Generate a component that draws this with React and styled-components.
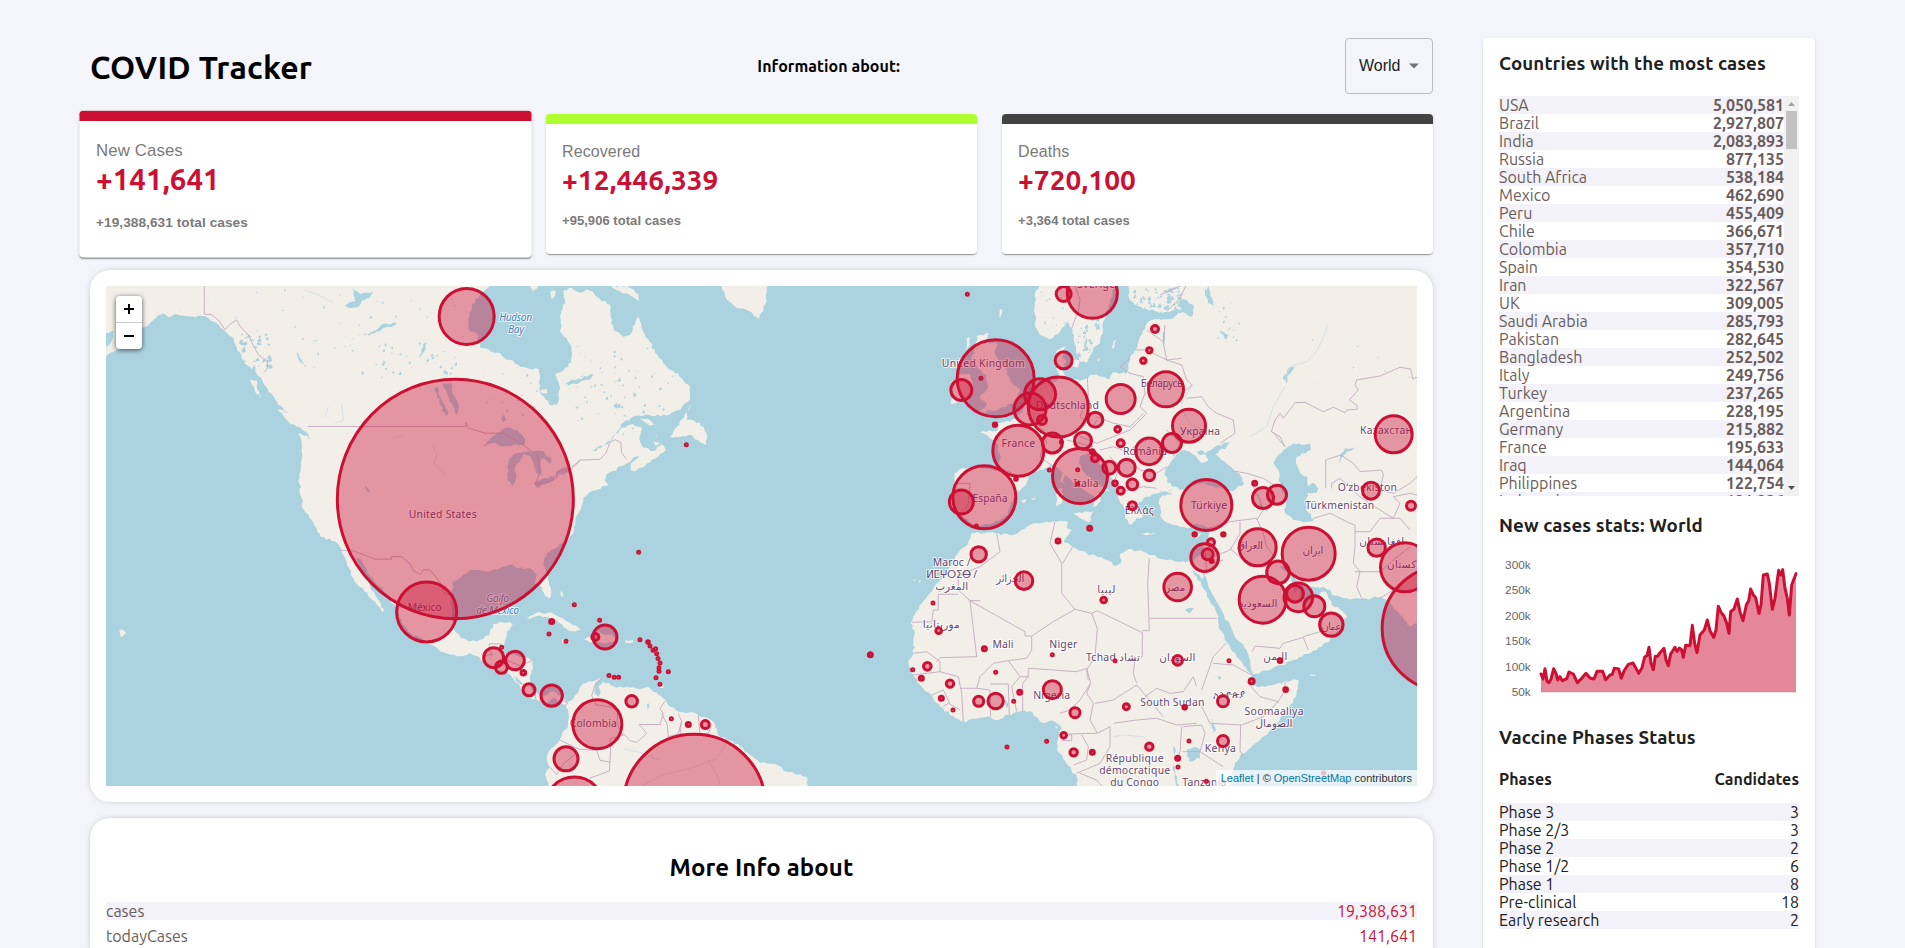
import React from "react";
import styled, { createGlobalStyle } from "styled-components";

const ubuntu = `Ubuntu, "Open Sans", "Noto Sans", sans-serif`;
const arial = `"Liberation Sans", Arial, sans-serif`;

const GlobalStyle = createGlobalStyle`
  * { box-sizing: border-box; margin: 0; }
  html, body { height: 100%; overflow: hidden; }
  body { background: #f4f5fb; font-family: ${ubuntu}; font-size: 16px; color: #000; }
  #root { height: 100%; }
`;

const Page = styled.div`
  display: flex;
  gap: 50px;
  height: 948px;
  padding: 38px 90px 0;
  overflow: hidden;
`;
const Main = styled.main`
  width: 1343px;
  flex: none;
`;
const Header = styled.header`
  display: flex;
  align-items: center;
  justify-content: space-between;
  height: 56px;
`;
const Title = styled.h1`
  padding-top: 1px;
  font-size: 32px;
  line-height: 36px;
  letter-spacing: 0.25px;
  font-weight: 700;
`;
const Prompt = styled.h4`
  font-size: 16px;
  line-height: 20px;
  font-weight: 700;
  letter-spacing: 0.05px;
`;
const Select = styled.button`
  display: flex;
  align-items: center;
  gap: 7px;
  width: 88px;
  height: 56px;
  padding: 0 0 0 13px;
  background: transparent;
  border: 1px solid #bdbec3;
  border-radius: 4px;
  font: 16px ${arial};
  color: #212121;
`;

const Cards = styled.section`
  display: flex;
  justify-content: space-between;
  margin-top: 20px;
`;
const Card = styled.article`
  width: 431px;
  height: 140px;
  padding: 16px;
  background: #fff;
  border-top: 10px solid ${(p) => p.$accent};
  border-radius: 4px;
  box-shadow: 0 2px 1px -1px rgba(0, 0, 0, 0.2), 0 1px 1px rgba(0, 0, 0, 0.14),
    0 1px 3px rgba(0, 0, 0, 0.12);
  transform: ${(p) => (p.$active ? "scale(1.05)" : "none")};
`;
const CardLabel = styled.p`
  font: 16px/23px ${arial};
  letter-spacing: 0.1px;
  color: #7a7a7a;
`;
const CardValue = styled.h2`
  font-size: 28px;
  line-height: 33px;
  letter-spacing: 0.05px;
  color: #cc1034;
`;
const CardTotal = styled.p`
  margin-top: 16px;
  font: bold 13px/18px ${arial};
  letter-spacing: 0.05px;
  color: #7a7a7a;
`;

const Panel = styled.section`
  margin-top: 16px;
  padding: 16px;
  background: #fff;
  border-radius: 20px;
  box-shadow: 0 0 8px -4px rgba(0, 0, 0, 0.5);
`;
const MapBox = styled.div`
  position: relative;
  height: 500px;
  overflow: hidden;
  background: #aad3df;
  svg { display: block; }
`;
const ZoomBar = styled.div`
  position: absolute;
  left: 10px;
  top: 10px;
  width: 26px;
  border-radius: 4px;
  background: #fff;
  box-shadow: 0 1px 5px rgba(0, 0, 0, 0.65);
`;
const ZoomButton = styled.div`
  display: flex;
  align-items: center;
  justify-content: center;
  height: 26px;
  & + & { height: 27px; border-top: 1px solid #ccc; }
`;
const Attribution = styled.div`
  position: absolute;
  right: 0;
  bottom: 0;
  height: 16px;
  padding: 0 5px;
  background: rgba(255, 255, 255, 0.7);
  font: 11px/16px ${arial};
  color: #333;
  a { color: #0078a8; }
`;

const InfoTitle = styled.h2`
  padding: 17px 0;
  font-size: 24px;
  line-height: 34px;
  letter-spacing: 0.1px;
  text-align: center;
`;
const InfoRow = styled.div`
  display: flex;
  justify-content: space-between;
  height: 18px;
  margin-bottom: 7px;
  line-height: 18px;
  font-size: 16px;
  color: #6a5d5d;
  background: ${(p) => (p.$shaded ? "#f3f2f8" : "transparent")};
`;
const InfoValue = styled.span`
  color: #cc1034;
`;

const Sidebar = styled.aside`
  width: 332px;
  height: 1000px;
  padding: 16px;
  background: #fff;
  border-radius: 4px;
  color: #212121;
  box-shadow: 0 2px 1px -1px rgba(0, 0, 0, 0.2), 0 1px 1px rgba(0, 0, 0, 0.14),
    0 1px 3px rgba(0, 0, 0, 0.12);
`;
const SideTitle = styled.h3`
  padding-bottom: 2px;
  font-size: 18.72px;
  line-height: 20px;
  letter-spacing: 0.12px;
`;
const CountryBox = styled.div`
  display: flex;
  height: 400px;
  margin: 20px 0;
  overflow: hidden;
`;
const Rows = styled.div`
  flex: 1;
`;
const Row = styled.div`
  display: flex;
  justify-content: space-between;
  height: 18px;
  line-height: 18px;
  font-size: 16px;
  color: ${(p) => (p.$dark ? "#212121" : "#6a5d5d")};
  &:nth-child(odd) { background: #f3f2f8; }
`;
const Strong = styled.strong`
  font-weight: 700;
`;
const ScrollTrack = styled.div`
  display: flex;
  flex-direction: column;
  align-items: center;
  width: 15px;
  background: #f1f1f1;
`;
const ScrollThumb = styled.div`
  width: 11px;
  height: 38px;
  margin-bottom: auto;
  background: #c1c1c1;
`;
const ChartBox = styled.div`
  height: 156px;
  margin: 18px 0 16px;
  svg { display: block; overflow: visible; }
`;
const PhaseHead = styled.div`
  display: flex;
  justify-content: space-between;
  margin: 19px 0 14px;
  font-size: 16px;
  line-height: 20px;
  font-weight: 700;
  letter-spacing: 0.05px;
`;

const stats = [
  ["New Cases", "+141,641", "+19,388,631 total cases", "#cc1034", true],
  ["Recovered", "+12,446,339", "+95,906 total cases", "#adff2f", false],
  ["Deaths", "+720,100", "+3,364 total cases", "#434343", false],
];
const countries = [
  ["USA", "5,050,581"], ["Brazil", "2,927,807"], ["India", "2,083,893"], ["Russia", "877,135"],
  ["South Africa", "538,184"], ["Mexico", "462,690"], ["Peru", "455,409"], ["Chile", "366,671"],
  ["Colombia", "357,710"], ["Spain", "354,530"], ["Iran", "322,567"], ["UK", "309,005"],
  ["Saudi Arabia", "285,793"], ["Pakistan", "282,645"], ["Bangladesh", "252,502"], ["Italy", "249,756"],
  ["Turkey", "237,265"], ["Argentina", "228,195"], ["Germany", "215,882"], ["France", "195,633"],
  ["Iraq", "144,064"], ["Philippines", "122,754"], ["Indonesia", "121,226"],
];
const phases = [
  ["Phase 3", 3], ["Phase 2/3", 3], ["Phase 2", 2], ["Phase 1/2", 6],
  ["Phase 1", 8], ["Pre-clinical", 18], ["Early research", 2],
];

/* Map geometry: the two hemispheres use their own grids, projected onto the map box. */
const west = (x, y) => [(x - 78) / 3, (y - 73) / 2.798];
const east = (x, y) => [774 + x / 3, y / 3 - 16];
const trace = (project, text, close = true) =>
  text
    .split("|")
    .map((part) => {
      const pts = part.trim().split(/\s+/).map((p) => p.split(",").map(Number));
      return "M" + pts.map(([x, y]) => project(x, y).map((n) => n.toFixed(1)).join(",")).join("L") + (close ? "Z" : "");
    })
    .join("");

/* Roughens a coast by displacing the middle of each edge. */
let seed = 7;
const rand = () => {
  seed = (seed * 16807) % 2147483647;
  return seed / 2147483647;
};
const rough = (text, amount = 0.22) =>
  text
    .split("|")
    .map((part) => {
      const pts = part.trim().split(/\s+/).map((p) => p.split(",").map(Number));
      const out = [];
      pts.forEach((a, i) => {
        const b = pts[(i + 1) % pts.length];
        const d = Math.hypot(b[0] - a[0], b[1] - a[1]);
        out.push(a);
        if (d < 14 || d > 90) return;
        const steps = Math.max(2, Math.round(d / 9));
        for (let k = 1; k < steps; k++) {
          const t = k / steps;
          const o = (rand() - 0.5) * Math.min(d, 34) * amount;
          out.push([a[0] + (b[0] - a[0]) * t + (o * (b[1] - a[1])) / d, a[1] + (b[1] - a[1]) * t - (o * (b[0] - a[0])) / d]);
        }
      });
      return out.map((p) => p.join(",")).join(" ");
    })
    .join("|");

const americas = `78,73 78,204 100,199 92,232 78,245 78,270 100,258 130,238 160,215 188,190 215,172 235,155 250,150 265,160 290,152 330,158 380,160 400,172 430,195 455,215 470,245 485,275 500,295 530,318 550,345 575,375 595,405 620,425 650,450 680,475 692,505 682,492 655,485 665,510 665,560 657,600 662,660 672,700 700,735 722,775 765,787 785,810 800,845 820,890 835,912 850,920 870,945 890,965 908,987 912,978 890,945 870,915 848,875 825,835 845,838 862,875 910,925 935,960 955,985 965,1015 985,1040 1040,1070 1075,1090 1130,1110 1170,1100 1190,1108 1220,1130 1260,1155 1290,1160 1315,1185 1330,1210 1350,1225 1375,1232 1400,1240 1420,1225 1440,1240 1455,1245 1465,1260 1465,1300 1440,1340 1410,1370 1400,1400 1410,1420 1395,1440 1405,1472 2185,1472 2178,1445 2120,1432 2080,1410 2040,1408 2010,1385 1980,1360 1950,1345 1915,1330 1905,1300 1890,1285 1850,1270 1800,1265 1770,1250 1755,1230 1730,1210 1700,1195 1670,1200 1640,1195 1600,1193 1570,1180 1555,1192 1562,1210 1555,1222 1543,1210 1545,1185 1563,1168 1510,1185 1490,1215 1475,1232 1460,1240 1450,1225 1420,1207 1390,1220 1365,1210 1350,1190 1355,1150 1360,1120 1330,1110 1290,1105 1265,1100 1275,1065 1280,1040 1298,1020 1290,1013 1240,1018 1228,1050 1200,1063 1170,1068 1140,1055 1120,1030 1115,980 1112,940 1120,900 1150,880 1170,868 1200,868 1230,872 1260,862 1290,853 1330,865 1350,862 1370,880 1365,905 1385,915 1395,940 1410,948 1413,920 1405,895 1398,870 1390,850 1400,820 1440,795 1465,780 1480,765 1485,740 1490,715 1505,690 1510,665 1545,645 1585,630 1575,618 1580,600 1600,590 1640,570 1660,552 1685,545 1652,570 1652,588 1665,592 1700,570 1735,550 1757,532 1745,515 1720,535 1690,525 1678,500 1685,470 1660,460 1620,475 1588,512 1530,540 1590,505 1630,455 1670,435 1760,435 1800,420 1830,390 1830,355 1805,330 1780,310 1750,290 1725,260 1710,230 1690,200 1677,150 1665,180 1650,210 1630,215 1600,195 1592,150 1590,125 1560,110 1540,90 1520,82 1500,92 1475,78 1450,85 1455,120 1440,160 1445,185 1440,200 1470,235 1475,270 1465,300 1425,320 1440,360 1430,405 1415,408 1380,370 1377,305 1330,300 1290,280 1250,260 1215,247 1200,245 1190,205 1170,200 1165,165 1185,110 1215,85 1230,73`;
const westIslands = `592,418 640,432 668,455 688,478 675,480 625,452 | 510,335 530,338 532,362 545,388 524,365 | 1340,1002 1375,985 1420,990 1470,1015 1512,1035 1468,1038 1430,1008 1380,995 | 1512,1062 1545,1040 1595,1048 1612,1065 1570,1072 1530,1070 | 1636,1064 1660,1064 1658,1071 1636,1071 | 1445,1063 1462,1063 1470,1072 1448,1072 | 1833,403 1812,440 1770,495 1835,490 1860,510 1878,518 1882,492 1860,455 1822,447 1820,430 | 1680,443 1700,445 1728,460 1712,464 | 1925,73 1945,115 1970,135 2000,140 2036,166 2060,115 2060,73 | 1592,73 1640,73 1675,95 1678,115 1650,100 1610,85 | 1350,73 1375,73 1358,88 | 1412,88 1425,84 1425,100 1416,110 | 118,1035 128,1035 138,1045 122,1055 | 1730,485 1732,500 | 1718,508 1740,512 1726,520 | 1380,365 1400,362 1402,372 1385,372 | 2360,1095 2366,1097 2360,1100 | 1445,925 1448,945 1440,935 | 1740,1190 1750,1188 1750,1198 1738,1198`;
const westLakes = `1208,520 1235,495 1275,470 1310,475 1335,500 1332,520 1300,518 1270,522 1240,512 | 1285,565 1300,545 1330,540 1322,560 1306,580 1308,612 1296,632 1282,615 | 1322,542 1345,535 1390,535 1415,560 1412,570 1385,555 1382,585 1388,608 1368,595 1360,565 1350,548 | 1362,625 1395,610 1435,603 1410,622 1370,637 | 1428,592 1470,580 1470,596 1430,602 | 1088,345 1112,343 1122,380 1138,410 1130,433 1108,395 | 1062,360 1072,355 1082,385 1105,430 1098,436 1078,400 | 1262,440 1272,433 1279,448 1268,455 | 795,128 825,115 818,80 840,95 880,90 870,105 845,115 835,132 805,134 | 862,208 895,192 912,178 960,178 925,188 890,200 868,212 | 852,632 865,640 870,652 858,645 | 1030,235 1042,230 1030,260 1018,275 | 1600,410 1610,400 1618,408 1610,416 | 1700,1245 1708,1240 1702,1260 | 1300,1165 1318,1175 1330,1190 1315,1182 | 650,258 665,280 680,302 660,285 | 1455,345 1475,335 1500,335 1485,345 | 1460,345 1540,320 1530,335 1465,352`;
const oldWorld = `745,48 750,90 790,118 850,128 905,118 905,130 850,142 802,158 780,200 765,240 750,262 745,290 740,312 700,306 690,326 640,315 600,332 560,328 545,300 560,275 545,262 560,225 530,240 528,280 535,330 500,335 470,360 445,395 420,430 390,455 350,462 355,480 300,488 330,505 350,520 362,560 350,605 300,592 245,595 222,612 225,645 208,700 228,735 260,745 285,775 340,758 385,735 392,700 412,665 440,640 445,615 480,600 520,585 545,605 580,640 620,665 645,680 640,712 662,692 655,665 690,665 650,640 615,610 598,580 600,560 625,548 650,575 690,615 710,650 718,690 740,720 735,745 755,765 768,745 790,740 770,705 800,680 838,668 880,660 845,678 836,700 845,745 880,765 920,775 950,762 990,775 985,800 970,835 955,858 935,873 890,875 850,868 790,845 745,838 722,850 722,880 708,887 680,870 620,850 590,838 578,830 550,815 575,780 560,775 565,757 540,752 500,755 450,765 400,795 345,790 310,790 275,790 265,820 240,840 210,890 180,930 150,970 125,1000 100,1040 92,1060 105,1090 100,1150 85,1180 100,1215 125,1250 150,1270 180,1310 220,1338 250,1355 330,1340 345,1350 400,1330 450,1323 480,1355 525,1355 545,1375 533,1410 530,1440 560,1480 590,1520 592,1548 1050,1548 1065,1480 1090,1450 1140,1410 1180,1370 1220,1320 1248,1280 1255,1230 1240,1228 1180,1245 1130,1250 1112,1240 1115,1215 1080,1170 1050,1130 1020,1080 1010,1030 980,970 950,920 933,898 945,905 967,928 974,905 985,950 1030,1030 1060,1090 1100,1140 1110,1170 1120,1213 1170,1200 1240,1170 1310,1140 1350,1110 1380,1070 1402,1040 1390,1025 1355,1005 1338,965 1325,965 1300,988 1265,988 1255,955 1245,970 1235,935 1218,905 1200,888 1215,892 1245,925 1280,955 1330,950 1350,960 1355,975 1400,985 1440,987 1500,982 1520,990 1530,1000 1560,1035 1590,1070 1611,1060 1611,48`;
const eastIslands = `290,198 328,190 312,220 350,218 345,255 372,290 400,345 422,358 410,398 360,415 290,432 322,402 298,380 325,350 318,315 300,300 275,275 285,230 | 235,315 270,312 278,350 265,390 212,402 218,365 210,345 | 478,48 465,70 465,160 480,195 508,208 535,192 565,155 578,180 588,230 600,275 620,278 640,235 660,220 668,190 672,150 690,100 705,48 | 578,270 600,272 595,292 580,290 | 700,212 708,210 704,230 696,238 | 530,660 548,655 545,700 528,710 | 545,612 552,610 550,640 542,635 | 580,728 640,724 628,757 600,745 | 782,788 830,790 800,796 | 938,800 965,790 950,806 | 422,692 440,686 432,700 | 452,686 468,684 462,690 | 360,118 368,120 358,145 | 260,205 268,200 270,225 256,245 | 1290,1214 1308,1214 1306,1218 1292,1218 | 1345,1245 1350,1244 | 100,930 106,925 103,935 | 118,930 125,932 116,938 | 526,1368 534,1370 528,1376 | 652,270 660,258 656,275`;
const eastSeas = `870,580 902,542 930,545 948,558 965,580 985,572 975,552 1005,530 1050,515 1040,530 1005,552 1045,585 1078,610 1093,640 1060,662 1020,652 975,640 935,648 900,660 862,638 855,605 | 950,545 965,540 978,552 960,556 | 1210,540 1240,520 1290,522 1292,540 1250,560 1248,580 1262,612 1282,620 1285,650 1300,638 1315,655 1310,668 1282,668 1278,720 1303,750 1270,757 1240,750 1215,728 1220,690 1200,640 1195,600 1180,578 | 895,95 915,88 943,112 935,140 905,125 | 968,52 980,62 985,48 1000,95 1000,108 985,100 | 1015,175 1045,195 1040,208 1022,190 | 840,125 895,130 880,145 840,150 | 848,185 855,190 856,225 848,215 | 920,1438 942,1430 962,1440 960,1465 928,1475 | 881,1425 888,1440 884,1455 | 880,1485 890,1530 898,1548 890,1548 | 840,664 880,670 852,678 | 1375,590 1380,560 1395,535 1425,532 1400,545 1383,565 | 995,1345 1008,1380 1000,1390 | 740,925 742,932 | 375,1290 385,1305 380,1320 | 1135,710 1143,700 1150,720 | 1160,700 1164,720 1158,725 | 1208,325 1230,292 1245,290 1222,318 1222,340 | 620,200 612,230 616,240 622,215 | 1012,1218 1025,1222 1018,1230 | 915,1020 942,1014 930,1030`;

const westBorders = `373,73 373,152 395,153 415,168 435,195 450,180 470,168 480,185 505,210 520,240 535,265 562,285 562,305 552,315 | 683,466 1157,466 1157,455 1165,470 1215,485 1270,485 1310,505 1340,525 1370,545 1380,575 1378,600 1365,628 1395,625 1430,610 1432,592 1470,588 1500,562 | 1475,580 1500,560 1560,558 1578,540 1590,510 1605,503 1622,510 1625,540 1638,556 | 785,813 820,814 885,837 935,837 935,830 965,830 990,850 1000,870 1022,880 1030,867 1050,867 1070,890 1085,910 1090,930 1112,940 | 1207,1125 1222,1105 1238,1105 1228,1090 1228,1074 1262,1074 1262,1100 | 1245,1130 1265,1115 1320,1135 1360,1120 | 1318,1185 1345,1190 | 1367,1215 1367,1230 | 1450,1232 1462,1240 1455,1250 | 1563,1170 1545,1190 1535,1220 1548,1245 1590,1250 1612,1262 1612,1300 1630,1330 1590,1340 1592,1372 1588,1430 1530,1450 | 1630,1325 1650,1345 1670,1350 1700,1325 1678,1300 1740,1300 1750,1270 1740,1255 1755,1235 | 1745,1270 1762,1300 1765,1335 1795,1325 1805,1290 1795,1270 | 1805,1290 1800,1325 1830,1330 1860,1325 1855,1275 | 1860,1325 1885,1325 1895,1300 | 1437,1342 1465,1355 1500,1370 1550,1372 1560,1400 1590,1405 | 1410,1420 1430,1440 1450,1410 1490,1380`;
const eastBorders = `592,130 575,175 | 595,125 600,90 585,48 | 765,240 800,240 860,270 905,265 | 750,265 720,290 750,310 790,320 | 790,320 795,370 780,410 800,430 | 840,75 900,48 | 917,48 900,85 862,122 | 855,165 850,220 860,270 905,285 920,330 935,345 920,360 | 622,320 625,380 600,440 640,470 650,450 | 650,440 700,460 750,470 790,430 | 800,430 750,480 700,500 650,520 600,500 | 660,540 700,530 740,545 780,520 820,500 | 440,430 490,480 500,520 | 490,520 480,560 520,590 | 560,510 600,520 640,530 | 228,640 270,640 265,700 240,740 | 350,590 420,620 | 690,560 720,590 700,640 | 760,580 780,600 830,610 860,590 | 730,665 790,650 830,655 | 800,180 850,215 | 920,385 965,380 985,410 1010,430 1060,450 1065,490 1020,520 | 860,480 900,520 880,560 | 1060,603 1100,610 1150,625 1190,650 1210,640 | 1120,650 1140,690 1150,720 1130,750 | 1178,485 1215,530 | 1174,485 1185,450 1200,430 1210,445 1245,398 1275,397 1330,425 1360,412 1395,428 1400,420 1432,418 1430,405 1408,390 1435,360 1425,345 1430,330 1500,318 1560,292 1592,297 1598,327 1611,322 | 1215,530 1200,500 1174,485 | 1337,655 1337,570 1382,555 1420,580 1440,605 1505,600 1510,615 1500,660 1540,670 1590,640 1611,620 | 1355,655 1355,640 1380,625 1440,680 1500,720 1540,745 | 1540,745 1560,700 1540,680 1590,670 1611,675 | 1300,745 1350,730 1410,760 1425,765 1425,830 1420,880 1440,905 1430,950 1445,985 | 1425,785 1470,785 1500,745 1560,745 1590,780 | 1425,905 1500,905 1540,870 1590,830 | 985,775 1050,755 1130,745 1150,790 1160,830 1190,870 | 1080,755 1080,790 1050,840 1000,860 | 1050,835 1110,890 1160,890 | 975,840 980,905 | 1000,880 1030,870 | 1117,1145 1125,1128 1200,1135 1210,1120 1270,1102 1285,1140 | 1270,1100 1320,1085 1330,1030 | 808,865 803,940 808,1082 785,1082 | 808,1045 1010,1045 | 787,1088 787,1160 765,1165 760,1210 770,1240 | 652,1022 787,1088 | 652,1022 635,1030 652,1075 645,1160 620,1200 625,1230 | 525,755 510,820 545,880 545,970 585,1018 635,1030 | 578,830 548,880 | 585,1018 520,1055 455,1098 435,1098 435,1085 270,992 235,960 235,920 262,905 300,890 360,845 350,790 | 235,973 175,973 175,1020 160,1020 155,1055 95,1057 | 270,992 290,1160 180,1163 170,1175 | 270,992 300,992 | 455,1098 455,1140 440,1165 385,1172 340,1180 300,1220 290,1255 | 100,1150 140,1145 180,1175 180,1205 100,1215 | 180,1205 235,1220 245,1270 250,1355 | 155,1275 190,1260 210,1300 | 190,1310 205,1300 240,1320 | 240,1255 290,1255 330,1260 332,1340 | 330,1242 385,1242 388,1335 | 385,1172 420,1220 395,1250 410,1325 | 428,1325 428,1240 445,1220 420,1220 | 445,1220 445,1195 520,1200 590,1205 620,1195 632,1240 600,1290 570,1320 540,1330 | 632,1240 620,1270 640,1300 630,1350 652,1390 560,1392 | 645,1300 700,1290 770,1245 800,1280 850,1340 | 555,1395 575,1395 575,1412 545,1412 | 605,1395 625,1430 620,1470 580,1485 | 652,1390 690,1370 690,1430 660,1480 590,1510 | 600,1510 650,1530 665,1548 | 700,1360 770,1350 830,1345 890,1365 950,1360 | 795,1280 830,1255 870,1270 910,1265 940,1220 950,1250 | 965,1260 1000,1160 1038,1120 | 1000,1180 1060,1185 1115,1215 | 1100,1235 1140,1280 1195,1295 1215,1260 1215,1235 | 1195,1295 1150,1340 1085,1365 990,1360 960,1300 | 1082,1365 1080,1440 1090,1460 | 908,1445 960,1445 1030,1490 | 905,1370 900,1445 890,1470 | 965,1365 975,1390 960,1445 | 910,1370 965,1365 | 1500,985 1540,960`;

const flecks = (n, x0, y0, x1, y1, size) =>
  Array.from({ length: n }, () => {
    const x = x0 + rand() * (x1 - x0);
    const y = y0 + rand() * (y1 - y0);
    const a = size * (0.4 + rand());
    return `${x},${y} ${x + a},${y - a * rand() * 1.6} ${x + a * 1.5},${y + a * 0.3} ${x + a * 0.4},${y + a * rand()}`;
  }).join("|");
const westFlecks = [
  flecks(50, 700, 80, 1160, 320, 4),
  flecks(24, 1210, 310, 1370, 440, 3.5),
  flecks(24, 900, 240, 1120, 330, 5),
  flecks(44, 1460, 230, 1780, 430, 5),
  flecks(20, 1480, 300, 1680, 500, 5),
  flecks(24, 230, 80, 680, 240, 3),
].join("|");
const coastFlecks = flecks(34, 475, 210, 570, 310, 7);
const eastFlecks = [
  flecks(30, 755, 50, 880, 115, 7),
  flecks(24, 590, 150, 650, 260, 7),
  flecks(22, 480, 60, 560, 190, 4),
  flecks(24, 840, 50, 900, 120, 8),
  flecks(12, 1000, 90, 1090, 230, 3.5),
  flecks(12, 1250, 200, 1600, 340, 2.5),
  flecks(14, 660, 640, 800, 740, 5),
].join("|");
const rivers = `1342,165 1335,190 1320,225 1305,250 1280,275 1230,290 1215,330 | 1215,350 1180,410 1160,470 1110,500 | 905,390 905,420 930,460 960,480 | 700,1400 730,1395 790,1400 830,1440 | 940,340 905,400`;
const westRivers = `1685,1472 1750,1440 1840,1420 1910,1395 1940,1350 | 1885,1400 1910,1440 1920,1472 | 1060,520 1070,545 1062,570 1095,600 | 940,498 965,492 | 1630,1368 1690,1380 1740,1400 | 675,85 720,100 760,120 | 735,440 745,410 | 785,400 790,450 765,455`;

/* Case circle: x, y, horizontal radius and, where it differs, vertical radius. */
const westCases = [
  [1160, 158, 27.5, 28], [1126, 669, 118, 119.7], [1040, 985, 30], [1241, 1113, 10], [1265, 1084, 1], [1264, 1140, 6],
  [1305, 1121, 9.3], [1330, 1155, 2.3], [1347, 1203, 6], [1415, 1219, 10.7], [1415, 1012, 2], [1483, 965, 1],
  [1407, 1047, 1], [1458, 1067, 1], [1552, 1299, 24.5], [1458, 1396, 12], [1483, 1528, 29], [1843, 1526, 71],
  [1655, 1235, 5.8], [1774, 1284, 1], [1825, 1300, 2], [1876, 1300, 4], [1575, 1055, 12], [1546, 1055, 3.5],
  [1559, 1008, 1], [1680, 1063, 1], [1704, 1069, 1.3], [1710, 1080, 1], [1719, 1092, 1], [1727, 1088, 1],
  [1730, 1102, 1], [1734, 1115, 1], [1740, 1128, 1], [1737, 1141, 1], [1737, 1151, 1], [1765, 1152, 1],
  [1728, 1169, 1], [1740, 1187, 1], [1587, 1163, 1], [1603, 1168, 1], [1616, 1168, 1], [1676, 818, 1],
  [1819, 517, 1], [2371, 1105, 2],
];
const eastCases = [
  [262, 73, 1], [551, 72, 7.5], [637, 70, 25], [347, 325, 38.5], [303, 325, 1], [244, 360, 10.5], [345, 464, 1.7],
  [551, 271, 8.5], [480, 373, 15.5], [450, 417, 16], [535, 411, 30], [486, 450, 4.5], [415, 542, 25.5],
  [313, 682, 31.5], [244, 696, 12], [289, 768, 1], [408, 627, 1.3], [508, 600, 1], [517, 519, 10], [544, 516, 1],
  [609, 512, 8.5], [600, 618, 27.5], [593, 599, 1], [593, 642, 1], [637, 545, 2], [645, 565, 3.5], [646, 449, 7.5],
  [713, 478, 2.8], [722, 520, 3.5], [722, 387, 14.5], [825, 177, 3.5], [808, 241, 2.7], [790, 272, 2.7],
  [858, 358, 17.5], [688, 593, 6.5], [740, 593, 8.5], [705, 640, 2.3], [722, 662, 3.5], [757, 643, 5.3],
  [808, 616, 5.3], [807, 544, 13.3], [757, 707, 4], [629, 775, 2], [927, 467, 16.5], [876, 519, 9.5],
  [979, 705, 25.5], [1124, 640, 2], [1149, 684, 10.5], [1191, 674, 9.5], [1541, 493, 18.5], [1473, 662, 8.5],
  [1593, 707, 4.5], [944, 793, 1.7], [1030, 793, 1.7], [1133, 832, 18.5], [1286, 851, 26.5], [993, 817, 3.5],
  [974, 863, 13.8], [983, 853, 5.5], [995, 873, 1.5], [893, 951, 13.8], [1194, 907, 11.3], [1148, 989, 23.5],
  [1255, 982, 14.3], [1245, 971, 8.5], [1303, 1009, 10.5], [1354, 1064, 11.7], [1490, 833, 8.7], [1575, 892, 24.5],
  [1694, 1075, 62.5], [1115, 1234, 2.5], [1047, 1172, 1], [1200, 1172, 1.8], [1217, 1259, 1.8], [1029, 1294, 5.5],
  [914, 1312, 1.8], [893, 1171, 4.8], [1029, 1413, 5.5], [927, 1413, 1], [893, 1465, 2], [894, 1491, 1],
  [979, 1534, 1], [1331, 1509, 1], [296, 853, 7.7], [432, 932, 8.8], [534, 813, 2], [671, 990, 2.8], [159, 999, 1],
  [176, 1082, 2.8], [313, 1136, 2], [517, 1154, 1], [705, 1172, 1], [142, 1189, 3.8], [98, 1199, 1], [124, 1225, 2],
  [210, 1241, 3.7], [184, 1285, 2], [219, 1320, 1], [296, 1294, 5], [347, 1293, 7.7], [401, 1294, 1],
  [419, 1267, 2], [347, 1207, 1], [517, 1259, 9], [585, 1328, 5], [739, 1310, 3], [551, 1396, 2.8], [500, 1414, 1],
  [581, 1447, 3.7], [637, 1447, 2], [808, 1430, 3.7], [381, 1431, 1],
];

/* Label: centre x, baseline y, width in pixels, text. */
const westLabels = [[1088, 721, 68, "United States"], [1034, 982, 34, "México"], [1540, 1306, 47, "Colombia"]];
const seaLabels = [[1307, 171, 33, "Hudson"], [1308, 205, 16, "Bay"], [1253, 957, 23, "Golfo"], [1253, 991, 43, "de México"]];
const eastLabels = [
  [310, 290, 83, "United Kingdom"], [562, 418, 63, "Deutschland"], [415, 530, 33.5, "France"], [330, 695, 35, "España"],
  [618, 650, 25, "Italia"], [648, 53, 38, "Sverige"], [845, 350, 42, "Беларусь"], [960, 495, 40, "Україна"], [795, 556, 44, "România"],
  [778, 733, 29, "Ελλάς"], [987, 716, 36, "Türkiye"], [1518, 491, 52, "Казахстан"], [1462, 662, 59, "Oʻzbekiston"],
  [1379, 716, 69, "Türkmenistan"], [215, 889, 38, "Maroc /"], [215, 925, 51, "ⵍⵎⵖⵔⵉⴱ /"], [215, 961, 33, "المغرب"],
  [391, 937, 28, "الجزائر"], [679, 970, 18, "ليبيا"], [184, 1074, 37, "موريتانيا"], [369, 1134, 21, "Mali"],
  [550, 1135, 28, "Niger"], [699, 1172, 54, "Tchad تشاد"], [515, 1287, 37, "Nigeria"], [892, 1172, 36, "السودان"],
  [877, 1307, 64, "South Sudan"], [764, 1476, 58, "République"], [764, 1512, 71, "démocratique"], [764, 1549, 49, "du Congo"],
  [1182, 1335, 59, "Soomaaliya"], [1182, 1370, 37, "الصومال"], [1186, 1170, 24, "اليمن"], [1046, 1284, 32, "ኢትዮጵያ"],
  [1021, 1445, 31, "Kenya"], [973, 1548, 44, "Tanzania"], [886, 962, 20, "مصر"], [1110, 838, 26, "العراق"],
  [1299, 853, 21, "ايران"], [1134, 1011, 39, "السعودية"], [1354, 1080, 20, "عمان"], [1505, 825, 45, "افغانستان"], [1575, 895, 36, "پاکستان"],
];

const MapSvg = styled.svg`
  .label {
    font-family: "Noto Sans", "DejaVu Sans", sans-serif;
    font-size: 10.4px;
    text-anchor: middle;
    fill: #65456d;
    stroke: rgba(255, 255, 255, 0.75);
    stroke-width: 2px;
    stroke-linejoin: round;
    paint-order: stroke;
  }
  .sea {
    font-style: italic;
    fill: #4d80b3;
  }
  .border {
    fill: none;
    stroke: #c3a9c0;
    stroke-width: 0.9;
  }
  .river {
    fill: none;
    stroke: #c4dde2;
    stroke-width: 0.7;
  }
`;

function Labels({ items, project, sea }) {
  return items.map(([x, y, width, text]) => {
    const [px, py] = project(x, y);
    return (
      <text key={text} className={sea ? "label sea" : "label"} x={px} y={py} textLength={width}>
        {text}
      </text>
    );
  });
}

function CaseCircles({ items, project }) {
  return items.map(([x, y, rx, ry = rx]) => {
    const [cx, cy] = project(x, y);
    return <ellipse key={`${x}-${y}`} cx={cx} cy={cy} rx={rx} ry={ry} />;
  });
}

const shapes = {
  americas: trace(west, rough(americas)),
  westIslands: trace(west, rough(westIslands)),
  westLakes: trace(west, rough(westLakes)),
  oldWorld: trace(east, rough(oldWorld)),
  eastIslands: trace(east, rough(eastIslands)),
  eastSeas: trace(east, rough(eastSeas)),
  westFlecks: trace(west, westFlecks),
  coastFlecks: trace(west, coastFlecks),
  eastFlecks: trace(east, eastFlecks),
};

function WorldMap() {
  return (
    <MapSvg width="1311" height="500" viewBox="0 0 1311 500">
      <g fill="#f2efe9">
        <path d={shapes.americas} />
        <path d={shapes.westIslands} />
        <path d={shapes.oldWorld} />
        <path d={shapes.eastIslands} />
      </g>
      <g fill="#aad3df">
        <path d={shapes.westLakes} />
        <path d={shapes.eastSeas} />
        <path d={shapes.westFlecks} />
        <path d={shapes.coastFlecks} />
        <path d={shapes.eastFlecks} />
      </g>
      <path className="river" d={trace(west, westRivers, false)} />
      <path className="river" d={trace(east, rivers, false)} />
      <path className="border" d={trace(west, westBorders, false)} />
      <path className="border" d={trace(east, eastBorders, false)} />
      <Labels items={westLabels} project={west} />
      <Labels items={seaLabels} project={west} sea />
      <Labels items={eastLabels} project={east} />
      <g fill="#cc1034" fillOpacity="0.4" stroke="#cc1034" strokeWidth="3">
        <CaseCircles items={westCases} project={west} />
        <CaseCircles items={eastCases} project={east} />
      </g>
    </MapSvg>
  );
}

const curve =
  "243,582 249,597 255,566 261,604 267,608 273,597 281,566 288,580 293,600 300,590 307,602 320,596 327,576 340,582 352,608 365,595 378,580 390,594 402,597 411,574 428,574 437,599 450,585 457,583 463,565 476,567 484,595 492,573 505,553 519,549 527,563 536,580 546,563 554,531 561,527 567,502 573,550 580,569 586,529 593,529 600,518 612,505 618,540 625,557 632,522 645,502 651,514 658,504 665,510 670,532 677,496 690,497 697,436 704,490 711,518 720,465 733,450 742,420 750,452 761,472 768,450 775,379 783,397 792,408 800,430 807,460 812,395 822,387 832,357 840,395 849,422 859,375 866,362 872,327 880,345 887,353 897,400 903,375 910,285 922,282 928,310 937,388 945,355 952,300 956,271 962,285 968,269 975,325 982,355 988,405 995,315 1008,281";

function CasesChart() {
  return (
    <svg width="300" height="156" viewBox="0 0 300 156">
      <g fontFamily='"Liberation Sans", Arial, sans-serif' fontSize="11.8" fill="#666" textAnchor="end">
        {["300k", "250k", "200k", "150k", "100k", "50k"].map((t, i) => (
          <text key={t} x="31.7" y={13 + i * 25.4}>{t}</text>
        ))}
      </g>
      <g transform="translate(-39 -76) scale(0.33333)">
        <path d="M240,637 H1011" stroke="#ddd" strokeWidth="3" />
        <polygon points={`243,636 ${curve} 1008,636`} fill="#cc1034" fillOpacity="0.5" />
        <polyline points={curve} fill="none" stroke="#cc1034" strokeWidth="9" strokeLinejoin="round" strokeLinecap="round" />
      </g>
    </svg>
  );
}

export default function App() {
  return (
    <>
      <GlobalStyle />
      <Page>
        <Main>
          <Header>
            <Title>COVID Tracker</Title>
            <Prompt>Information about:</Prompt>
            <Select>
              World
              <svg width="12" height="6" viewBox="0 0 12 6">
                <path d="M1,0.5H11L6,5.5Z" fill="#757575" />
              </svg>
            </Select>
          </Header>
          <Cards>
            {stats.map(([label, value, total, accent, active]) => (
              <Card key={label} $accent={accent} $active={active}>
                <CardLabel>{label}</CardLabel>
                <CardValue>{value}</CardValue>
                <CardTotal>{total}</CardTotal>
              </Card>
            ))}
          </Cards>
          <Panel>
            <MapBox>
              <WorldMap />
              <ZoomBar>
                <ZoomButton>
                  <svg width="10" height="10" viewBox="0 0 10 10"><path d="M0,5H10M5,0V10" stroke="#000" strokeWidth="2" /></svg>
                </ZoomButton>
                <ZoomButton>
                  <svg width="10" height="10" viewBox="0 0 10 10"><path d="M0,5H10" stroke="#000" strokeWidth="2" /></svg>
                </ZoomButton>
              </ZoomBar>
              <Attribution>
                <a>Leaflet</a> | © <a>OpenStreetMap</a> contributors
              </Attribution>
            </MapBox>
          </Panel>
          <Panel>
            <InfoTitle>More Info about</InfoTitle>
            <InfoRow $shaded>
              cases <InfoValue>19,388,631</InfoValue>
            </InfoRow>
            <InfoRow>
              todayCases <InfoValue>141,641</InfoValue>
            </InfoRow>
          </Panel>
        </Main>
        <Sidebar>
          <SideTitle>Countries with the most cases</SideTitle>
          <CountryBox>
            <Rows>
              {countries.map(([name, count]) => (
                <Row key={name}>
                  {name} <Strong>{count}</Strong>
                </Row>
              ))}
            </Rows>
            <ScrollTrack>
              <svg width="15" height="15" viewBox="0 0 15 15"><path d="M4,10H11L7.5,6Z" fill="#a3a3a3" /></svg>
              <ScrollThumb />
              <svg width="15" height="15" viewBox="0 0 15 15"><path d="M4,5H11L7.5,9Z" fill="#505050" /></svg>
            </ScrollTrack>
          </CountryBox>
          <SideTitle>New cases stats: World</SideTitle>
          <ChartBox>
            <CasesChart />
          </ChartBox>
          <SideTitle>Vaccine Phases Status</SideTitle>
          <PhaseHead>
            <span>Phases</span>
            <span>Candidates</span>
          </PhaseHead>
          <Rows>
            {phases.map(([name, count]) => (
              <Row key={name} $dark>
                {name} <span>{count}</span>
              </Row>
            ))}
          </Rows>
        </Sidebar>
      </Page>
    </>
  );
}
